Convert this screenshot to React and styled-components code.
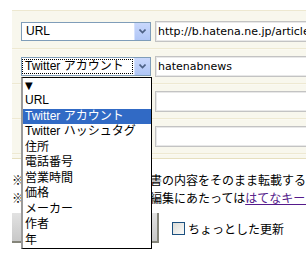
import React from 'react'
import styled, { createGlobalStyle } from 'styled-components'

const GlobalStyle = createGlobalStyle`
  html, body {
    margin: 0;
    padding: 0;
    background: #fff;
    overflow: hidden;
  }
  body {
    font-family: "Liberation Sans", "Noto Sans CJK JP", sans-serif;
    font-size: 12px;
    color: #000;
  }
`;

const Page = styled.div`
  position: relative;
  width: 306px;
  height: 263px;
  overflow: hidden;
  padding: 10px 0 0 12px;
  box-sizing: border-box;
`;

const Table = styled.div`
  width: 360px;
  background: #f8f7ed;
  border-top: 1px solid #ede8d0;
  padding-top: 3px;
  padding-bottom: 4px;
  border-bottom: 1px solid #e6dfbf;
`;

const Row = styled.div`
  display: flex;
  align-items: center;
  gap: 4px;
  height: 34px;
  padding-left: 9px;
  border-bottom: 1px solid #eee9d2;
  box-shadow: 0 1px 0 #faf9f2;
`;

const SelectWrap = styled.div`
  position: relative;
  width: 130px;
  flex: none;
`;

const SelectBox = styled.div`
  display: flex;
  align-items: stretch;
  height: 19px;
  border: 1px solid #7f9db9;
  background: #fff;
  box-sizing: border-box;
`;

const SelectLabel = styled.div`
  flex: 1;
  display: flex;
  align-items: center;
  padding-left: ${p => (p.$focused ? '2px' : '3px')};
  margin: 1px 1px 1px 0;
  border: 1px dotted ${p => (p.$focused ? '#000' : 'transparent')};
  white-space: nowrap;
  line-height: 15px;
`;

const ArrowButton = styled.div`
  width: 15px;
  display: flex;
  align-items: center;
  justify-content: center;
  background: linear-gradient(#c9d8fc, #b0c6f6);
  border-left: 1px solid #d6e2fd;
`;

const TextField = styled.input`
  width: 220px;
  height: 21px;
  box-sizing: border-box;
  border: 1px solid #c3c3c3;
  box-shadow: inset 0 0 0 1px #e8e8e8;
  background: #fff;
  padding: 0 2px;
  font-family: "DejaVu Sans", sans-serif;
  font-size: 11px;
  color: #000;
  outline: none;
`;

const Spacer = styled.div`
  width: 130px;
  flex: none;
`;

const ListBox = styled.ul`
  position: absolute;
  top: calc(100% + 1px);
  left: 0;
  width: 131px;
  margin: 0;
  padding: 0;
  list-style: none;
  background: #fff;
  border: 1px solid #000;
  border-left: 2px solid #9a9a9a;
  box-sizing: border-box;
  z-index: 10;
`;

const ListItem = styled.li`
  height: 15.5px;
  line-height: 15.5px;
  padding-left: 2px;
  white-space: nowrap;
  background: ${p => (p.$selected ? '#316ac5' : '#fff')};
  color: ${p => (p.$selected ? '#fff' : '#000')};
`;

const Triangle = styled.span`
  font-family: "DejaVu Sans", sans-serif;
  font-size: 10px;
`;

const Notes = styled.div`
  margin-top: 12px;
  line-height: 18px;
  white-space: nowrap;
`;

const Note = styled.div`
  display: flex;
  font-family: "Noto Sans CJK JP", sans-serif;
  span:first-child {
    width: 18px;
    flex: none;
  }
`;

const Link = styled.a`
  color: #551a8b;
  text-decoration: underline;
`;

const Footer = styled.div`
  display: flex;
  align-items: center;
  gap: 13px;
  margin-top: 6px;
`;

const SubmitButton = styled.button`
  width: 147px;
  height: 30px;
  border: none;
  border-right: 2px solid #85857a;
  border-bottom: 2px solid #85857a;
  background: linear-gradient(#e2e2e2, #c8c8c8);
  font-family: "Noto Sans CJK JP", sans-serif;
  font-size: 12px;
`;

const CheckLabel = styled.label`
  display: flex;
  align-items: center;
  gap: 3px;
  font-family: "Noto Sans CJK JP", sans-serif;
`;

const CheckBox = styled.span`
  width: 13px;
  height: 13px;
  box-sizing: border-box;
  border: 1px solid #1c5180;
  background: linear-gradient(135deg, #dcdcd7, #fbfbf9);
`;

function Chevron() {
  return (
    <svg width="7" height="5" viewBox="0 0 7 5">
      <path d="M0.5 0.5 L3.5 3.5 L6.5 0.5" fill="none" stroke="#4d6185" strokeWidth="1.6" />
    </svg>
  );
}

const options = [
  'URL',
  'Twitter アカウント',
  'Twitter ハッシュタグ',
  '住所',
  '電話番号',
  '営業時間',
  '価格',
  'メーカー',
  '作者',
  '年',
];

function Select({ value, focused, open }) {
  return (
    <SelectWrap>
      <SelectBox>
        <SelectLabel $focused={focused}>{value}</SelectLabel>
        <ArrowButton>
          <Chevron />
        </ArrowButton>
      </SelectBox>
      {open && (
        <ListBox>
          <ListItem>
            <Triangle>▼</Triangle>
          </ListItem>
          {options.map(o => (
            <ListItem key={o} $selected={o === value}>
              {o}
            </ListItem>
          ))}
        </ListBox>
      )}
    </SelectWrap>
  );
}

export default function App() {
  return (
    <Page>
      <GlobalStyle />
      <Table>
        <Row>
          <Select value="URL" />
          <TextField defaultValue="http://b.hatena.ne.jp/articles/" />
        </Row>
        <Row>
          <Select value="Twitter アカウント" focused open />
          <TextField defaultValue="hatenabnews" />
        </Row>
        <Row>
          <Spacer />
          <TextField />
        </Row>
        <Row>
          <Spacer />
          <TextField />
        </Row>
      </Table>
      <Notes>
        <Note>
          <span>※</span>
          <span>他のウェブサイトや文書の内容をそのまま転載することはおやめください。</span>
        </Note>
        <Note>
          <span>※</span>
          <span>
            各キーワードの作成・編集にあたっては<Link href="#">はてなキーワードガイドライン</Link>
          </span>
        </Note>
      </Notes>
      <Footer>
        <SubmitButton type="button">この内容で登録する</SubmitButton>
        <CheckLabel>
          <CheckBox />
          ちょっとした更新
        </CheckLabel>
      </Footer>
    </Page>
  );
}
